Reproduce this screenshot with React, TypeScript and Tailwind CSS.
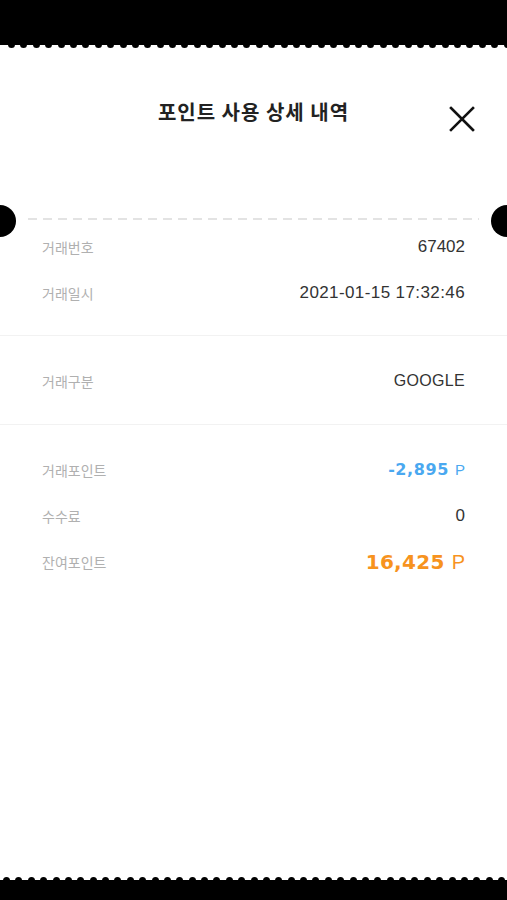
import React from "react";

const bumps = Array.from({ length: 41 });

const Row: React.FC<{ label: string; children: React.ReactNode }> = ({ label, children }) => (
  <div className="flex h-[46px] items-center justify-between pl-[42px] pr-[42px]">
    <span className="text-[14px] text-[#b0b0b0] font-['Noto_Sans_CJK_KR',sans-serif]">{label}</span>
    <span className="flex items-baseline">{children}</span>
  </div>
);

export default function App() {
  return (
    <div className="relative flex h-[900px] w-[507px] flex-col overflow-hidden bg-white font-['Liberation_Sans','Noto_Sans_CJK_KR',sans-serif]">
      {/* top perforated edge */}
      <div className="relative h-[45px] shrink-0 bg-black">
        <div className="absolute left-[8px] right-[-4px] top-[41px] flex justify-between">
          {bumps.map((_, i) => (
            <span key={i} className="block h-[7px] w-[7px] rounded-full bg-black" />
          ))}
        </div>
      </div>

      {/* header */}
      <div className="relative flex h-[134px] shrink-0 items-center justify-center">
        <h1 className="text-[20px] font-bold tracking-[1px] text-[#222] font-['Noto_Sans_CJK_KR',sans-serif]">
          포인트 사용 상세 내역
        </h1>
        <button className="absolute right-[32px] top-[61px]" aria-label="close">
          <svg width="26" height="26" viewBox="0 0 26 26" fill="none">
            <path d="M2 2L24 24M24 2L2 24" stroke="#111" strokeWidth="2.6" strokeLinecap="square" />
          </svg>
        </button>
      </div>

      {/* dashed line with notches */}
      <div className="relative mt-[39px] h-[2px] shrink-0">
        <div className="mx-[28px] h-[2px] bg-[repeating-linear-gradient(90deg,#e3e3e3_0_9px,transparent_9px_15px)]" />
        <span className="absolute left-[-16px] top-[-13px] h-[32px] w-[32px] rounded-full bg-black" />
        <span className="absolute right-[-16px] top-[-13px] h-[32px] w-[32px] rounded-full bg-black" />
      </div>

      <div className="pt-[4px] pb-[19px]">
        <Row label="거래번호">
          <span className="text-[17px] text-[#333]">67402</span>
        </Row>
        <Row label="거래일시">
          <span className="text-[17px] tracking-[0.4px] text-[#333]">2021-01-15 17:32:46</span>
        </Row>
      </div>
      <div className="h-px bg-[#f2f2f2]" />

      <div className="pt-[22px] pb-[20px]">
        <Row label="거래구분">
          <span className="text-[16px] tracking-[0.3px] text-[#333]">GOOGLE</span>
        </Row>
      </div>
      <div className="h-px bg-[#f2f2f2]" />

      <div className="pt-[22px]">
        <Row label="거래포인트">
          <span className="text-[16px] font-bold tracking-[0.6px] text-[#4aa8f0] font-['DejaVu_Sans',sans-serif]">-2,895</span>
          <span className="ml-[6px] text-[15px] text-[#4aa8f0]">P</span>
        </Row>
        <Row label="수수료">
          <span className="text-[17px] text-[#333]">0</span>
        </Row>
        <Row label="잔여포인트">
          <span className="text-[20px] font-bold tracking-[0.3px] text-[#f7931e] font-['DejaVu_Sans',sans-serif]">16,425</span>
          <span className="ml-[7px] text-[20px] text-[#f7931e]">P</span>
        </Row>
      </div>

      <div className="flex-1" />

      {/* bottom perforated edge */}
      <div className="relative h-[20px] shrink-0 bg-black">
        <div className="absolute left-[3px] right-[2px] top-[-3px] flex justify-between">
          {bumps.map((_, i) => (
            <span key={i} className="block h-[7px] w-[7px] rounded-full bg-black" />
          ))}
        </div>
      </div>
    </div>
  );
}
